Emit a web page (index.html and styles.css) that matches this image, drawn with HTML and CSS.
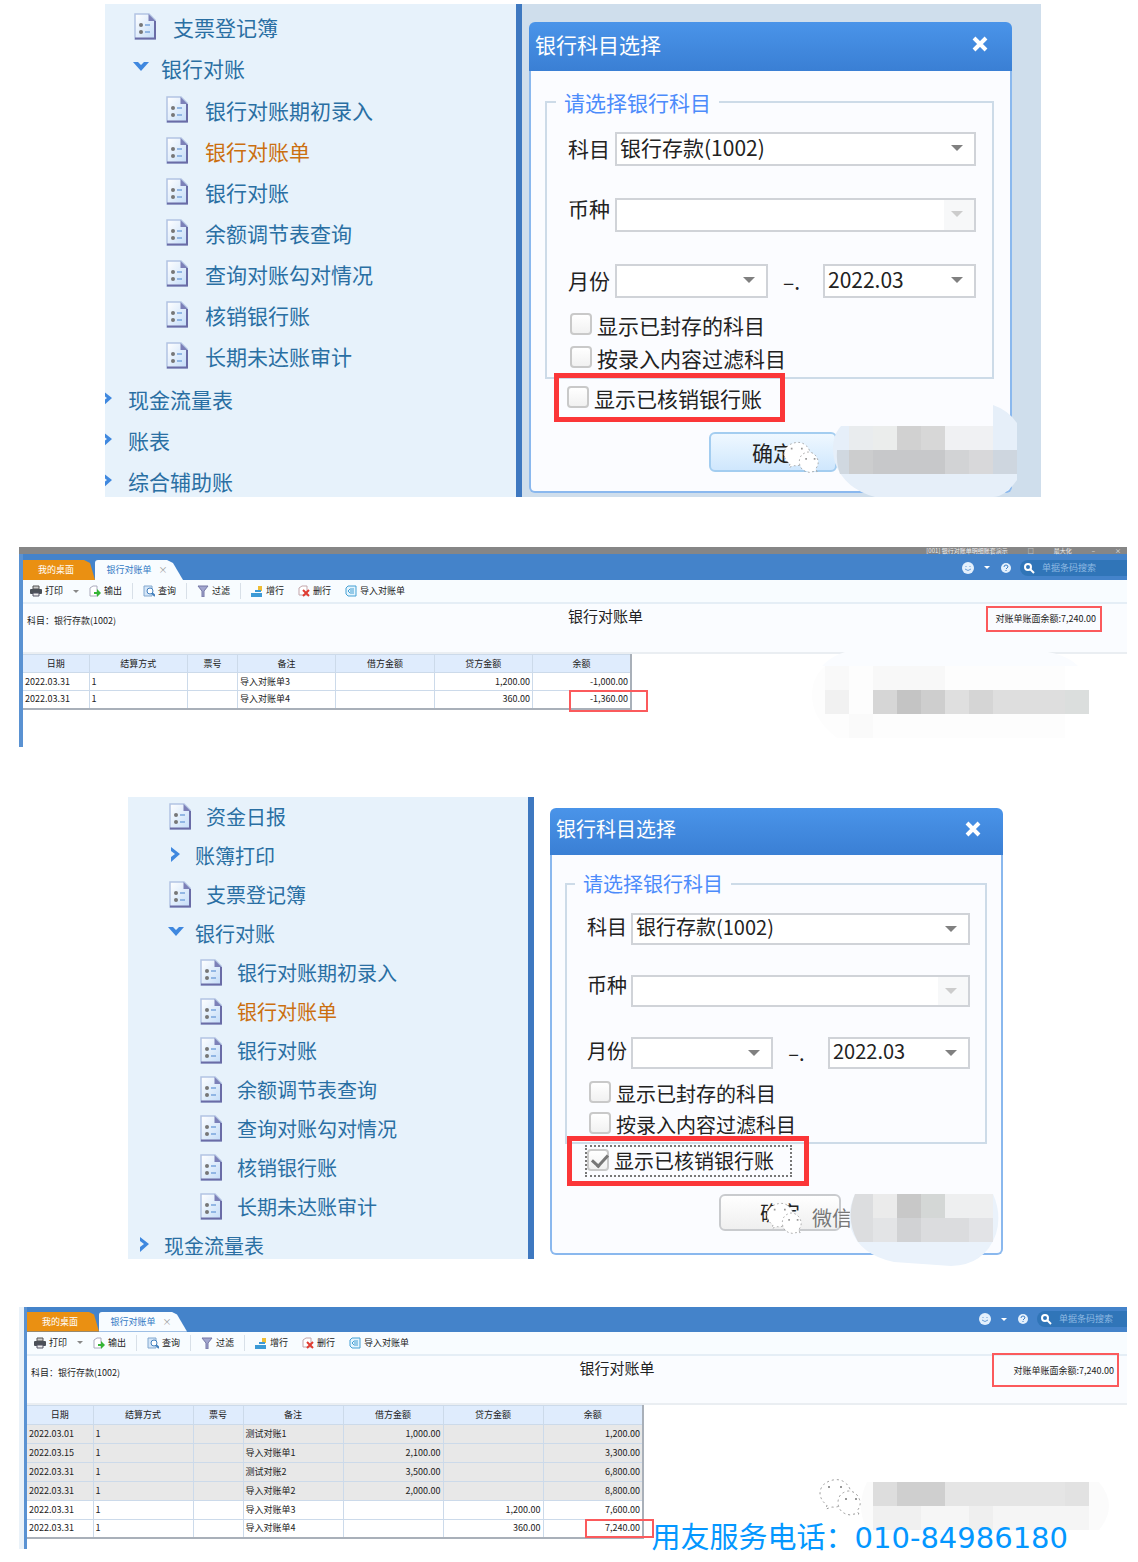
FILE: index.html
```html
<!DOCTYPE html>
<html lang="zh-CN">
<head>
  <meta charset="utf-8">
  <title>银行对账单</title>
  <link rel="stylesheet" href="styles.css">
</head>
<body>
  <svg class="sprite" aria-hidden="true">
    <defs>
      <linearGradient id="paper" x1="0" y1="0" x2="1" y2="1">
        <stop offset="0" stop-color="#ffffff"/>
        <stop offset="1" stop-color="#c3dcf8"/>
      </linearGradient>
    </defs>
    <symbol id="doc" viewBox="0 0 22 27">
      <path d="M1 1H15L21 7V26H1Z" fill="url(#paper)" stroke="#b3c4e3" stroke-width="1.5"/>
      <path d="M1 25.5H21V8" fill="none" stroke="#6a6ca6" stroke-width="2"/>
      <path d="M14.5 1V8H21.5Z" fill="#7c80b8"/>
      <circle cx="7" cy="12" r="2" fill="#777"/>
      <circle cx="7" cy="19" r="2" fill="#777"/>
      <path d="M11 12H16M11 19H16" stroke="#7aa5dd" stroke-width="1.5"/>
    </symbol>
    <symbol id="down" viewBox="0 0 16 16">
      <path d="M0 2H5L8 5L11 2H16L8 11Z" fill="#3f88df"/>
    </symbol>
    <symbol id="right" viewBox="0 0 16 16">
      <path d="M3 0V4L7 7L3 10V15L12 7Z" fill="#3f88df"/>
    </symbol>
    <symbol id="close" viewBox="0 0 16 16">
      <path d="M2 2L14 14M14 2L2 14" stroke="#fff" stroke-width="4"/>
    </symbol>
    <symbol id="print" viewBox="0 0 12 12">
      <path d="M3 1H9V4H3Z" fill="#ccc" stroke="#555"/>
      <rect x="0" y="4" width="12" height="5" rx="1" fill="#4b5058"/>
      <path d="M3 8H9V11H3Z" fill="#eee" stroke="#556"/>
    </symbol>
    <symbol id="export" viewBox="0 0 12 12">
      <path d="M1 3L4 1H8V11H1Z" fill="#fff" stroke="#aab"/>
      <path d="M5 7H8V4L12 8L8 12V9H5Z" fill="#35b535"/>
    </symbol>
    <symbol id="query" viewBox="0 0 12 12">
      <path d="M1 1H9V11H1Z" fill="#d5e6f8" stroke="#82a8cf"/>
      <circle cx="7" cy="6" r="3" fill="#fff" stroke="#4380bd"/>
      <path d="M9 8L12 11" stroke="#4380bd" stroke-width="2"/>
    </symbol>
    <symbol id="filter" viewBox="0 0 12 12">
      <path d="M1 1H11L7 6V12H5V6Z" fill="#a2a6cf" stroke="#7477a5"/>
    </symbol>
    <symbol id="addrow" viewBox="0 0 12 12">
      <path d="M0 8H11V12H0Z" fill="#3c9ad6"/>
      <path d="M7 1H11V6H7Z" fill="#eebd35"/>
      <path d="M4 6H10" stroke="#3c9ad6" stroke-width="2"/>
    </symbol>
    <symbol id="delrow" viewBox="0 0 12 12">
      <path d="M1 3L4 1H9V10H1Z" fill="#fff" stroke="#c2a5aa"/>
      <path d="M5 5L11 11M11 5L5 11" stroke="#e03c32" stroke-width="2"/>
    </symbol>
    <symbol id="import" viewBox="0 0 12 12">
      <path d="M3 1H11V11H3L1 9V3Z" fill="#e4f4fd" stroke="#45a0d4"/>
      <path d="M9 4H5L3 6L5 8H9M5 6H9" fill="none" stroke="#45a0d4"/>
    </symbol>
    <symbol id="face" viewBox="0 0 12 12">
      <circle cx="6" cy="6" r="6" fill="#e4f0fc"/>
      <path d="M4 4V5M8 4V5M3 7Q6 10 9 7" fill="none" stroke="#6d9fd6"/>
    </symbol>
    <symbol id="help" viewBox="0 0 12 12">
      <circle cx="6" cy="6" r="5" fill="#e4f0fc"/>
      <path d="M4 5Q4 3 6 3Q8 3 8 5L6 7M6 8V9" fill="none" stroke="#3f7fc6"/>
    </symbol>
    <symbol id="search" viewBox="0 0 12 12">
      <circle cx="5" cy="5" r="3" fill="none" stroke="#fff" stroke-width="2"/>
      <path d="M7 7L11 11" stroke="#fff" stroke-width="2"/>
    </symbol>
    <symbol id="chat" viewBox="0 0 42 40">
      <path d="M8 27L7 31L13 29Q19 30 25 25Q35 19 30 9Q24 0 14 2Q1 5 1 16Q2 23 8 27Z"/>
      <path d="M40 36L38 33Q42 28 41 23Q38 13 29 13Q19 15 19 25Q20 36 32 37L35 36Z"/>
      <path d="M9 9H12M21 9H24M26 21H29M36 21H39" stroke-width="2"/>
    </symbol>
  </svg>

  <main>
    <section class="shot menu-shot large">
      <nav class="side">
        <ul class="tree">
          <li><a class="leaf" href="#"><svg><use href="#doc"/></svg>支票登记簿</a></li>
          <li>
            <a class="folder" href="#"><svg><use href="#down"/></svg>银行对账</a>
            <ul>
              <li><a class="leaf" href="#"><svg><use href="#doc"/></svg>银行对账期初录入</a></li>
              <li><a class="leaf active" href="#"><svg><use href="#doc"/></svg>银行对账单</a></li>
              <li><a class="leaf" href="#"><svg><use href="#doc"/></svg>银行对账</a></li>
              <li><a class="leaf" href="#"><svg><use href="#doc"/></svg>余额调节表查询</a></li>
              <li><a class="leaf" href="#"><svg><use href="#doc"/></svg>查询对账勾对情况</a></li>
              <li><a class="leaf" href="#"><svg><use href="#doc"/></svg>核销银行账</a></li>
              <li><a class="leaf" href="#"><svg><use href="#doc"/></svg>长期未达账审计</a></li>
            </ul>
          </li>
          <li><a class="folder root" href="#"><svg><use href="#right"/></svg>现金流量表</a></li>
          <li><a class="folder root" href="#"><svg><use href="#right"/></svg>账表</a></li>
          <li><a class="folder root" href="#"><svg><use href="#right"/></svg>综合辅助账</a></li>
        </ul>
      </nav>
      <div class="stage">
        <form class="dialog">
          <header>
            <h2>银行科目选择</h2>
            <button class="close" type="button" aria-label="关闭"><svg><use href="#close"/></svg></button>
          </header>
          <div class="dialog-body">
            <fieldset>
              <legend>请选择银行科目</legend>
              <div class="field">
                <label for="subject1">科目</label>
                <div class="combo"><select id="subject1"><option>银行存款(1002)</option></select></div>
              </div>
              <div class="field raised">
                <label for="currency1">币种</label>
                <div class="combo off"><select id="currency1" disabled><option></option></select></div>
              </div>
              <div class="field">
                <label for="from1">月份</label>
                <div class="combo"><select id="from1"><option></option></select></div>
                <span class="dash">–.</span>
                <div class="combo"><select aria-label="结束月份"><option>2022.03</option></select></div>
              </div>
              <div class="checks">
                <label class="check"><input type="checkbox">显示已封存的科目</label>
                <label class="check"><input type="checkbox">按录入内容过滤科目</label>
              </div>
            </fieldset>
            <div class="marked">
              <label class="check"><input type="checkbox">显示已核销银行账</label>
            </div>
            <button class="ok primary" type="button">确定</button>
          </div>
        </form>
      </div>
      <svg class="chat chat-one" aria-hidden="true"><use href="#chat"/></svg>
      <svg class="mosaic mosaic-one" viewBox="0 0 190 92" aria-hidden="true">
        <path d="M14 21H166V0Q181 5 190 18V75Q178 92 166 92H48Q18 84 8 58Q2 34 14 21Z" fill="#e6eff9"/>
        <path d="M22 21H46V45H22Z" fill="#e9ecee"/>
        <path d="M46 21H70V45H46Z" fill="#ebedec"/>
        <path d="M70 21H94V45H70Z" fill="#d1d1d1"/>
        <path d="M94 21H118V45H94Z" fill="#d7d7d7"/>
        <path d="M118 21H166V45H118Z" fill="#f0f1f3"/>
        <path d="M10 45H22V69H13Q9 58 10 45Z" fill="#d0d8e0"/>
        <path d="M22 45H46V69H22Z" fill="#cccdce"/>
        <path d="M46 45H118V69H46Z" fill="#c7c8ca"/>
        <path d="M118 45H142V69H118Z" fill="#d2d3d5"/>
        <path d="M142 45H166V69H142Z" fill="#d8d8da"/>
        <path d="M166 45H190V69H166Z" fill="#ced6df"/>
      </svg>
    </section>

    <section class="shot page-shot">
      <div class="winbar"><span>[001] 银行对账单明细账套演示</span><span>□</span><span>最大化</span><span>–</span><span>×</span></div>
      <div class="page">
        <div class="topbar">
          <button class="tab home" type="button">我的桌面</button>
          <button class="tab current" type="button">银行对账单 <span>×</span></button>
          <div class="tools">
            <svg><use href="#face"/></svg><i class="caret"></i><svg><use href="#help"/></svg>
            <label class="search"><svg><use href="#search"/></svg><input type="text" placeholder="单据条码搜索" aria-label="搜索"></label>
          </div>
        </div>
        <div class="toolbar">
          <button class="tool" type="button"><svg><use href="#print"/></svg>打印</button>
          <i class="caret"></i>
          <button class="tool" type="button"><svg><use href="#export"/></svg>输出</button>
          <i class="sep"></i>
          <button class="tool" type="button"><svg><use href="#query"/></svg>查询</button>
          <i class="sep"></i>
          <button class="tool" type="button"><svg><use href="#filter"/></svg>过滤</button>
          <i class="sep"></i>
          <button class="tool" type="button"><svg><use href="#addrow"/></svg>增行</button>
          <button class="tool" type="button"><svg><use href="#delrow"/></svg>删行</button>
          <button class="tool" type="button"><svg><use href="#import"/></svg>导入对账单</button>
        </div>
        <div class="heading">
          <span class="subject">科目：银行存款(1002)</span>
          <h2>银行对账单</h2>
          <span class="total">对账单账面余额:7,240.00</span>
        </div>
        <table>
          <colgroup><col class="date"><col class="wide"><col class="slim"><col class="wide"><col class="wide"><col class="wide"><col class="wide"></colgroup>
          <thead>
            <tr><th>日期</th><th>结算方式</th><th>票号</th><th>备注</th><th>借方金额</th><th>贷方金额</th><th>余额</th></tr>
          </thead>
          <tbody>
            <tr><td>2022.03.31</td><td>1</td><td></td><td>导入对账单3</td><td></td><td class="num">1,200.00</td><td class="num">-1,000.00</td></tr>
            <tr><td>2022.03.31</td><td>1</td><td></td><td>导入对账单4</td><td></td><td class="num">360.00</td><td class="num ringed">-1,360.00</td></tr>
          </tbody>
        </table>
      </div>
      <svg class="mosaic mosaic-two" viewBox="0 0 288 92" aria-hidden="true">
        <path d="M10 19Q24 4 50 2L200 2Q250 2 266 19Z" fill="#fafcff"/>
        <path d="M13 19H253V91H25Q0 72 0 48Q0 30 13 19Z" fill="#fdfdfd"/>
        <path d="M13 19H37V43H13Z" fill="#f9f9f9"/>
        <path d="M61 19H133V43H61Z" fill="#f8f8f8"/>
        <path d="M13 43H37V67H13Z" fill="#f1f1f1"/>
        <path d="M37 67H61V91H37Z" fill="#fafafa"/>
        <path d="M61 43H85V67H61Z" fill="#d6d6d6"/>
        <path d="M85 43H109V67H85Z" fill="#c4c4c4"/>
        <path d="M109 43H133V67H109Z" fill="#cecece"/>
        <path d="M133 43H157V67H133Z" fill="#dfdfdf"/>
        <path d="M157 43H181V67H157Z" fill="#d5d5d5"/>
        <path d="M181 43H253V67H181Z" fill="#dedede"/>
        <path d="M253 43H277V67H253Z" fill="#dbdedd"/>
      </svg>
    </section>

    <section class="shot menu-shot small">
      <nav class="side">
        <ul class="tree">
          <li><a class="leaf" href="#"><svg><use href="#doc"/></svg>资金日报</a></li>
          <li><a class="folder" href="#"><svg><use href="#right"/></svg>账簿打印</a></li>
          <li><a class="leaf" href="#"><svg><use href="#doc"/></svg>支票登记簿</a></li>
          <li>
            <a class="folder" href="#"><svg><use href="#down"/></svg>银行对账</a>
            <ul>
              <li><a class="leaf" href="#"><svg><use href="#doc"/></svg>银行对账期初录入</a></li>
              <li><a class="leaf active" href="#"><svg><use href="#doc"/></svg>银行对账单</a></li>
              <li><a class="leaf" href="#"><svg><use href="#doc"/></svg>银行对账</a></li>
              <li><a class="leaf" href="#"><svg><use href="#doc"/></svg>余额调节表查询</a></li>
              <li><a class="leaf" href="#"><svg><use href="#doc"/></svg>查询对账勾对情况</a></li>
              <li><a class="leaf" href="#"><svg><use href="#doc"/></svg>核销银行账</a></li>
              <li><a class="leaf" href="#"><svg><use href="#doc"/></svg>长期未达账审计</a></li>
            </ul>
          </li>
          <li><a class="folder root" href="#"><svg><use href="#right"/></svg>现金流量表</a></li>
        </ul>
      </nav>
      <div class="stage">
        <form class="dialog">
          <header>
            <h2>银行科目选择</h2>
            <button class="close" type="button" aria-label="关闭"><svg><use href="#close"/></svg></button>
          </header>
          <div class="dialog-body">
            <fieldset>
              <legend>请选择银行科目</legend>
              <div class="field">
                <label for="subject2">科目</label>
                <div class="combo"><select id="subject2"><option>银行存款(1002)</option></select></div>
              </div>
              <div class="field raised">
                <label for="currency2">币种</label>
                <div class="combo off"><select id="currency2" disabled><option></option></select></div>
              </div>
              <div class="field">
                <label for="from2">月份</label>
                <div class="combo"><select id="from2"><option></option></select></div>
                <span class="dash">–.</span>
                <div class="combo"><select aria-label="结束月份"><option>2022.03</option></select></div>
              </div>
              <div class="checks">
                <label class="check"><input type="checkbox">显示已封存的科目</label>
                <label class="check"><input type="checkbox">按录入内容过滤科目</label>
              </div>
            </fieldset>
            <div class="marked">
              <label class="check focused"><input type="checkbox" checked>显示已核销银行账</label>
            </div>
            <button class="ok" type="button">确定</button>
          </div>
        </form>
      </div>
      <svg class="chat chat-two" aria-hidden="true"><use href="#chat"/></svg>
      <span class="source">微信</span>
      <svg class="mosaic mosaic-three" viewBox="0 0 150 92" aria-hidden="true">
        <path d="M6 20H144Q153 40 147 60Q136 91 102 92L45 88Q11 81 2 55Q-2 36 6 20Z" fill="#eaf2fb"/>
        <path d="M6 20H24V68H9Q-4 45 6 20Z" fill="#dcdddf"/>
        <path d="M24 20H48V44H24Z" fill="#ebebeb"/>
        <path d="M48 20H72V44H48Z" fill="#c8c8c8"/>
        <path d="M72 20H96V44H72Z" fill="#d4d7d6"/>
        <path d="M96 20H144V44H96Z" fill="#eeeff0"/>
        <path d="M24 44H48V68H24Z" fill="#e3e4e6"/>
        <path d="M48 44H72V68H48Z" fill="#d1d2d4"/>
        <path d="M72 44H120V68H72Z" fill="#dbdcde"/>
        <path d="M120 44H144V68H120Z" fill="#e2e3e6"/>
      </svg>
    </section>

    <section class="shot page-shot lower">
      <div class="page">
        <div class="topbar">
          <button class="tab home" type="button">我的桌面</button>
          <button class="tab current" type="button">银行对账单 <span>×</span></button>
          <div class="tools">
            <svg><use href="#face"/></svg><i class="caret"></i><svg><use href="#help"/></svg>
            <label class="search"><svg><use href="#search"/></svg><input type="text" placeholder="单据条码搜索" aria-label="搜索"></label>
          </div>
        </div>
        <div class="toolbar">
          <button class="tool" type="button"><svg><use href="#print"/></svg>打印</button>
          <i class="caret"></i>
          <button class="tool" type="button"><svg><use href="#export"/></svg>输出</button>
          <i class="sep"></i>
          <button class="tool" type="button"><svg><use href="#query"/></svg>查询</button>
          <i class="sep"></i>
          <button class="tool" type="button"><svg><use href="#filter"/></svg>过滤</button>
          <i class="sep"></i>
          <button class="tool" type="button"><svg><use href="#addrow"/></svg>增行</button>
          <button class="tool" type="button"><svg><use href="#delrow"/></svg>删行</button>
          <button class="tool" type="button"><svg><use href="#import"/></svg>导入对账单</button>
        </div>
        <div class="heading">
          <span class="subject">科目：银行存款(1002)</span>
          <h2>银行对账单</h2>
          <span class="total">对账单账面余额:7,240.00</span>
        </div>
        <table>
          <colgroup><col class="date"><col class="wide"><col class="slim"><col class="wide"><col class="wide"><col class="wide"><col class="wide"></colgroup>
          <thead>
            <tr><th>日期</th><th>结算方式</th><th>票号</th><th>备注</th><th>借方金额</th><th>贷方金额</th><th>余额</th></tr>
          </thead>
          <tbody>
            <tr class="done"><td>2022.03.01</td><td>1</td><td></td><td>测试对账1</td><td class="num">1,000.00</td><td></td><td class="num">1,200.00</td></tr>
            <tr class="done"><td>2022.03.15</td><td>1</td><td></td><td>导入对账单1</td><td class="num">2,100.00</td><td></td><td class="num">3,300.00</td></tr>
            <tr class="done"><td>2022.03.31</td><td>1</td><td></td><td>测试对账2</td><td class="num">3,500.00</td><td></td><td class="num">6,800.00</td></tr>
            <tr class="done"><td>2022.03.31</td><td>1</td><td></td><td>导入对账单2</td><td class="num">2,000.00</td><td></td><td class="num">8,800.00</td></tr>
            <tr><td>2022.03.31</td><td>1</td><td></td><td>导入对账单3</td><td></td><td class="num">1,200.00</td><td class="num">7,600.00</td></tr>
            <tr><td>2022.03.31</td><td>1</td><td></td><td>导入对账单4</td><td></td><td class="num">360.00</td><td class="num ringed">7,240.00</td></tr>
          </tbody>
        </table>
      </div>
      <svg class="chat chat-three" aria-hidden="true"><use href="#chat"/></svg>
      <svg class="mosaic mosaic-four" viewBox="0 0 248 48" aria-hidden="true">
        <path d="M6 0H238Q258 24 238 48H6Q-6 24 6 0Z" fill="#fbfbfb"/>
        <path d="M12 0H36V24H12Z" fill="#dddddd"/>
        <path d="M36 0H84V24H36Z" fill="#cfcfcf"/>
        <path d="M84 0H204V24H84Z" fill="#e5e5e5"/>
        <path d="M204 0H228V24H204Z" fill="#e2e2e2"/>
        <path d="M12 24H60V48H12Z" fill="#f0f0f0"/>
        <path d="M60 24H108V48H60Z" fill="#f6f6f6"/>
        <path d="M108 24H132V48H108Z" fill="#efefef"/>
        <path d="M132 24H228V48H132Z" fill="#f5f5f5"/>
      </svg>
    </section>

    <p class="phone">用友服务电话：010-84986180</p>
  </main>
</body>
</html>
```

FILE: styles.css
```css
* {
  box-sizing: border-box;
}

body {
  margin: 0;
  background: #fff;
  font-family: "Noto Sans CJK SC", sans-serif;
  color: #222;
}

button, input, select {
  font: inherit;
  color: inherit;
  margin: 0;
}

button {
  border: none;
  background: none;
  padding: 0;
  cursor: pointer;
}

h2 {
  margin: 0;
  font-weight: normal;
}

.sprite {
  position: absolute;
  width: 0;
  height: 0;
}

main {
  position: relative;
  display: flex;
  flex-direction: column;
  gap: 50px;
  padding: 4px 0 12px;
}

.shot {
  position: relative;
}

/* menu tree with the dialog next to it */
.menu-shot {
  display: flex;
}

.large {
  margin: 0 97px 0 105px;
  font-size: 21px;
  background: #cfdeec;
}

.small {
  margin: 0 128px;
  font-size: 20px;
}

.side {
  flex: 0 0 417px;
  overflow: hidden;
  contain: size;
  background: #e7f2fb;
  border-right: 6px solid #3e78c0;
}

.small .side {
  flex-basis: 406px;
}

.side ul {
  list-style: none;
  margin: 0;
  padding: 0;
}

.large .tree {
  padding-top: 2px;
}

.large .tree ul {
  padding: 1px 0 2px;
}

.side a {
  display: flex;
  align-items: center;
  height: 41px;
  color: #2a6fa3;
  text-decoration: none;
  white-space: nowrap;
}

.small .side a {
  height: 39px;
}

.side a.active {
  color: #cb6f10;
}

.leaf {
  gap: 17px;
  padding-left: 29px;
}

.leaf svg {
  width: 22px;
  height: 27px;
}

.folder {
  gap: 12px;
  padding-left: 28px;
}

.folder svg {
  width: 16px;
  height: 16px;
}

.tree ul .leaf {
  padding-left: 61px;
}

.folder.root {
  padding-left: 0;
  margin-left: -5px;
}

.small .leaf {
  gap: 15px;
  padding-left: 41px;
}

.small .folder {
  gap: 11px;
  padding-left: 40px;
}

.small .tree ul .leaf {
  padding-left: 72px;
}

.small .folder.root {
  margin-left: 0;
  padding-left: 9px;
}

.stage {
  flex: 1;
  padding: 18px 29px 4px 7px;
}

.small .stage {
  padding: 11px 7px 4px 16px;
}

.dialog header {
  display: flex;
  align-items: center;
  justify-content: space-between;
  height: 49px;
  padding: 0 24px 5px 6px;
  color: #fff;
  background: linear-gradient(#4a94e9, #3a7fd4);
  border-radius: 6px 6px 0 0;
}

.small .dialog header {
  height: 47px;
  padding-right: 22px;
}

.dialog h2 {
  font-size: inherit;
}

.close svg {
  display: block;
  width: 16px;
  height: 16px;
}

.dialog-body {
  padding: 16px 16px 19px 14px;
  background: #fbfcff;
  border: 2px solid #8ab8ee;
  border-top: none;
  border-radius: 0 0 6px 6px;
}

.small .dialog-body {
  padding: 15px 14px 22px 13px;
}

fieldset {
  margin: 0;
  min-width: 0;
  padding: 15px 16px 3px 21px;
  border: 2px solid #cddbe8;
}

.small fieldset {
  padding: 15px 15px 2px 20px;
}

legend {
  margin-left: -12px;
  padding: 0 8px;
  line-height: 30px;
  color: #4c8bfb;
}

.small legend {
  line-height: 28px;
}

.field {
  display: flex;
  align-items: center;
  margin-bottom: 32px;
}

.field:nth-of-type(3) {
  margin-bottom: 0;
}

.small .field {
  margin-bottom: 30px;
}

.small .field:nth-of-type(3) {
  margin-bottom: 0;
}

.field label {
  flex: 0 0 47px;
  padding-bottom: 3px;
  line-height: 20px;
}

.small .field label {
  flex-basis: 44px;
}

.raised {
  align-items: flex-start;
}

.combo {
  position: relative;
  flex: 1;
  display: flex;
}

.combo select {
  appearance: none;
  width: 100%;
  height: 34px;
  padding: 0 0 4px 3px;
  line-height: 26px;
  border: 2px solid #d0d3d8;
  border-radius: 0;
  background: #fff;
  opacity: 1;
}

.small .combo select {
  height: 32px;
  line-height: 24px;
}

.combo::after {
  content: "";
  position: absolute;
  right: 13px;
  top: 13px;
  border: 6px solid transparent;
  border-top-color: #808080;
  border-bottom: none;
  pointer-events: none;
}

.combo.off select {
  background: linear-gradient(to left, #f7f8f9 30px, #fff 30px);
}

.combo.off::after {
  border-top-color: #ccc;
}

.dash {
  flex: 0 0 55px;
  padding-right: 8px;
  text-align: center;
}

.checks {
  margin-top: 10px;
}

.small .checks {
  margin-top: 9px;
}

.check {
  display: flex;
  align-items: center;
  gap: 5px;
  height: 33px;
}

.small .check {
  height: 31px;
}

.check input {
  appearance: none;
  width: 22px;
  height: 22px;
  margin: 0 0 2px 2px;
  border: 2px solid #c9c9c9;
  border-radius: 4px;
  background: linear-gradient(#fff, #f1f1f1);
}

.check input:checked::after {
  content: "";
  display: block;
  width: 7px;
  height: 13px;
  margin: 0 0 0 6px;
  border: solid #777;
  border-width: 0 3px 3px 0;
  transform: rotate(42deg);
}

.marked {
  position: relative;
  width: max-content;
  margin: -6px 0 0 9px;
  padding: 3px 18px 3px 6px;
  border: 5px solid #fb3638;
}

.small .marked {
  margin: -8px 0 0 2px;
  padding: 4px 12px 4px 13px;
}

.small .check.focused {
  height: 32px;
  padding-right: 16px;
  border: 2px dotted #777;
}

.check.focused input {
  margin-left: 0;
}

.ok {
  display: block;
  width: 128px;
  height: 40px;
  margin: 10px 0 0 164px;
  border: 2px solid #c9cbce;
  border-radius: 6px;
  background: linear-gradient(#fff, #efefef);
}

.ok.primary {
  border-color: #a3cdf0;
  background: linear-gradient(#eff8ff, #cfe7fd);
}

.small .ok {
  width: 122px;
  height: 37px;
  margin: 8px 0 0 154px;
}

/* statement page */
.page-shot {
  margin: 0 11px 0 19px;
  font-size: 9px;
  line-height: 12px;
}

.winbar {
  display: flex;
  justify-content: flex-end;
  gap: 20px;
  height: 7px;
  padding-right: 6px;
  font-size: 6px;
  line-height: 7px;
  color: #eee;
  background: #868686;
}

.page {
  padding-bottom: 37px;
  border-left: 4px solid #5a92d2;
  background: #fff;
}

.lower {
  margin-top: -2px;
  padding-left: 5px;
  background: #eaf2f9;
}

.lower .page {
  padding-bottom: 10px;
  border-left-width: 3px;
}

.topbar {
  display: flex;
  align-items: flex-end;
  height: 26px;
  background: #4483ca;
}

.lower .topbar {
  height: 25px;
}

.tab {
  height: 20px;
}

.tab.home {
  width: 72px;
  padding-right: 6px;
  color: #fff;
  background: #ea9012;
  clip-path: polygon(0 0, 61px 0, 67px 3px, 100% 100%, 0 100%);
}

.tab.current {
  width: 88px;
  padding-right: 4px;
  color: #3179c4;
  background: #f8fcff;
  border-radius: 3px 0 0 0;
  clip-path: polygon(0 0, 72px 0, 78px 3px, 100% 100%, 0 100%);
  white-space: nowrap;
}

.tab span {
  margin-left: 5px;
  color: #999;
}

.tools {
  display: flex;
  align-items: center;
  gap: 10px;
  height: 25px;
  margin-left: auto;
}

.tools svg {
  width: 12px;
  height: 12px;
}

.caret {
  border: 3px solid transparent;
  border-top-color: #888;
  border-bottom: none;
}

.tools .caret {
  border-top-color: #fff;
}

.search {
  display: flex;
  align-items: center;
  gap: 7px;
  width: 107px;
  height: 16px;
  margin-left: -2px;
  padding-left: 3px;
  background: #3075b8;
  border-radius: 8px 0 0 8px;
}

.lower .search {
  width: 90px;
}

.search input {
  flex: 1;
  min-width: 0;
  padding: 0;
  border: none;
  background: none;
}

.search input::placeholder {
  color: #8fb9e2;
}

.toolbar {
  display: flex;
  align-items: center;
  gap: 10px;
  height: 24px;
  padding-left: 7px;
  background: #f8fcff;
  border-bottom: 2px solid #e5eef6;
}

.tool {
  display: flex;
  align-items: center;
  gap: 3px;
}

.tool + .tool {
  margin-left: 4px;
}

.tool svg {
  width: 12px;
  height: 12px;
}

.sep {
  width: 1px;
  height: 16px;
  background: #d8e0e8;
}

.heading {
  display: grid;
  grid-template-columns: 1fr auto 1fr;
  align-items: start;
  height: 50px;
  padding: 2px 25px 0 4px;
  background: #fafcff;
  border-bottom: 2px solid #eaeef2;
}

.heading h2 {
  padding-left: 82px;
  font-size: 15px;
  line-height: 20px;
}

.subject {
  padding-top: 9px;
}

.total {
  justify-self: end;
  padding: 5px 4px 5px 8px;
  border: 2px solid #fb5a5c;
}

.lower .heading {
  height: 49px;
  padding-right: 8px;
}

.lower .heading h2 {
  padding-left: 84px;
}

.lower .total {
  margin-top: -5px;
  padding: 10px 3px 8px 20px;
}

table {
  width: 609px;
  table-layout: fixed;
  border-collapse: collapse;
  border-right: 2px solid #a9b0b9;
  border-bottom: 2px solid #a9b0b9;
}

.lower table {
  width: 617px;
}

.date {
  width: 66px;
}

.slim {
  width: 50px;
}

tr {
  height: 18px;
}

.lower tr {
  height: 19px;
}

th, td {
  padding: 0 2px;
  border: 1px solid #ccdaea;
  border-width: 1px 0 0 1px;
  white-space: nowrap;
}

th:first-child, td:first-child {
  border-left: none;
}

th {
  font-weight: normal;
  background: #dfecfd;
}

.done {
  background: #e8e8e8;
}

.num {
  text-align: right;
}

.ringed {
  position: relative;
}

.ringed::after {
  content: "";
  position: absolute;
  left: 36px;
  right: -18px;
  top: -1px;
  bottom: -4px;
  border: 2px solid #fb5a5c;
}

.lower .ringed::after {
  left: 41px;
  right: -12px;
  bottom: -1px;
}

/* things lying over the pages */
.chat, .mosaic, .source, .phone {
  position: absolute;
}

.chat {
  width: 42px;
  height: 40px;
  fill: #fff;
  stroke: #999;
  stroke-width: 1;
  stroke-dasharray: 2 3;
}

.chat-one {
  right: 222px;
  bottom: 22px;
  width: 36px;
  height: 34px;
}

.chat-two {
  right: 208px;
  bottom: 23px;
  width: 36px;
  height: 34px;
}

.chat-three {
  right: 266px;
  bottom: 31px;
}

.source {
  right: 158px;
  bottom: 27px;
  line-height: 28px;
  color: #777;
}

.mosaic-one {
  right: 24px;
  bottom: 0;
  width: 190px;
}

.mosaic-two {
  right: 27px;
  bottom: 8px;
  width: 288px;
}

.mosaic-three {
  right: 11px;
  bottom: -7px;
  width: 150px;
}

.mosaic-four {
  right: 18px;
  bottom: 19px;
  width: 248px;
}

.phone {
  right: 70px;
  bottom: 6px;
  margin: 0;
  font-family: "DejaVu Sans", "Noto Sans CJK SC", sans-serif;
  font-size: 29px;
  line-height: 34px;
  color: #0497ff;
}
```
